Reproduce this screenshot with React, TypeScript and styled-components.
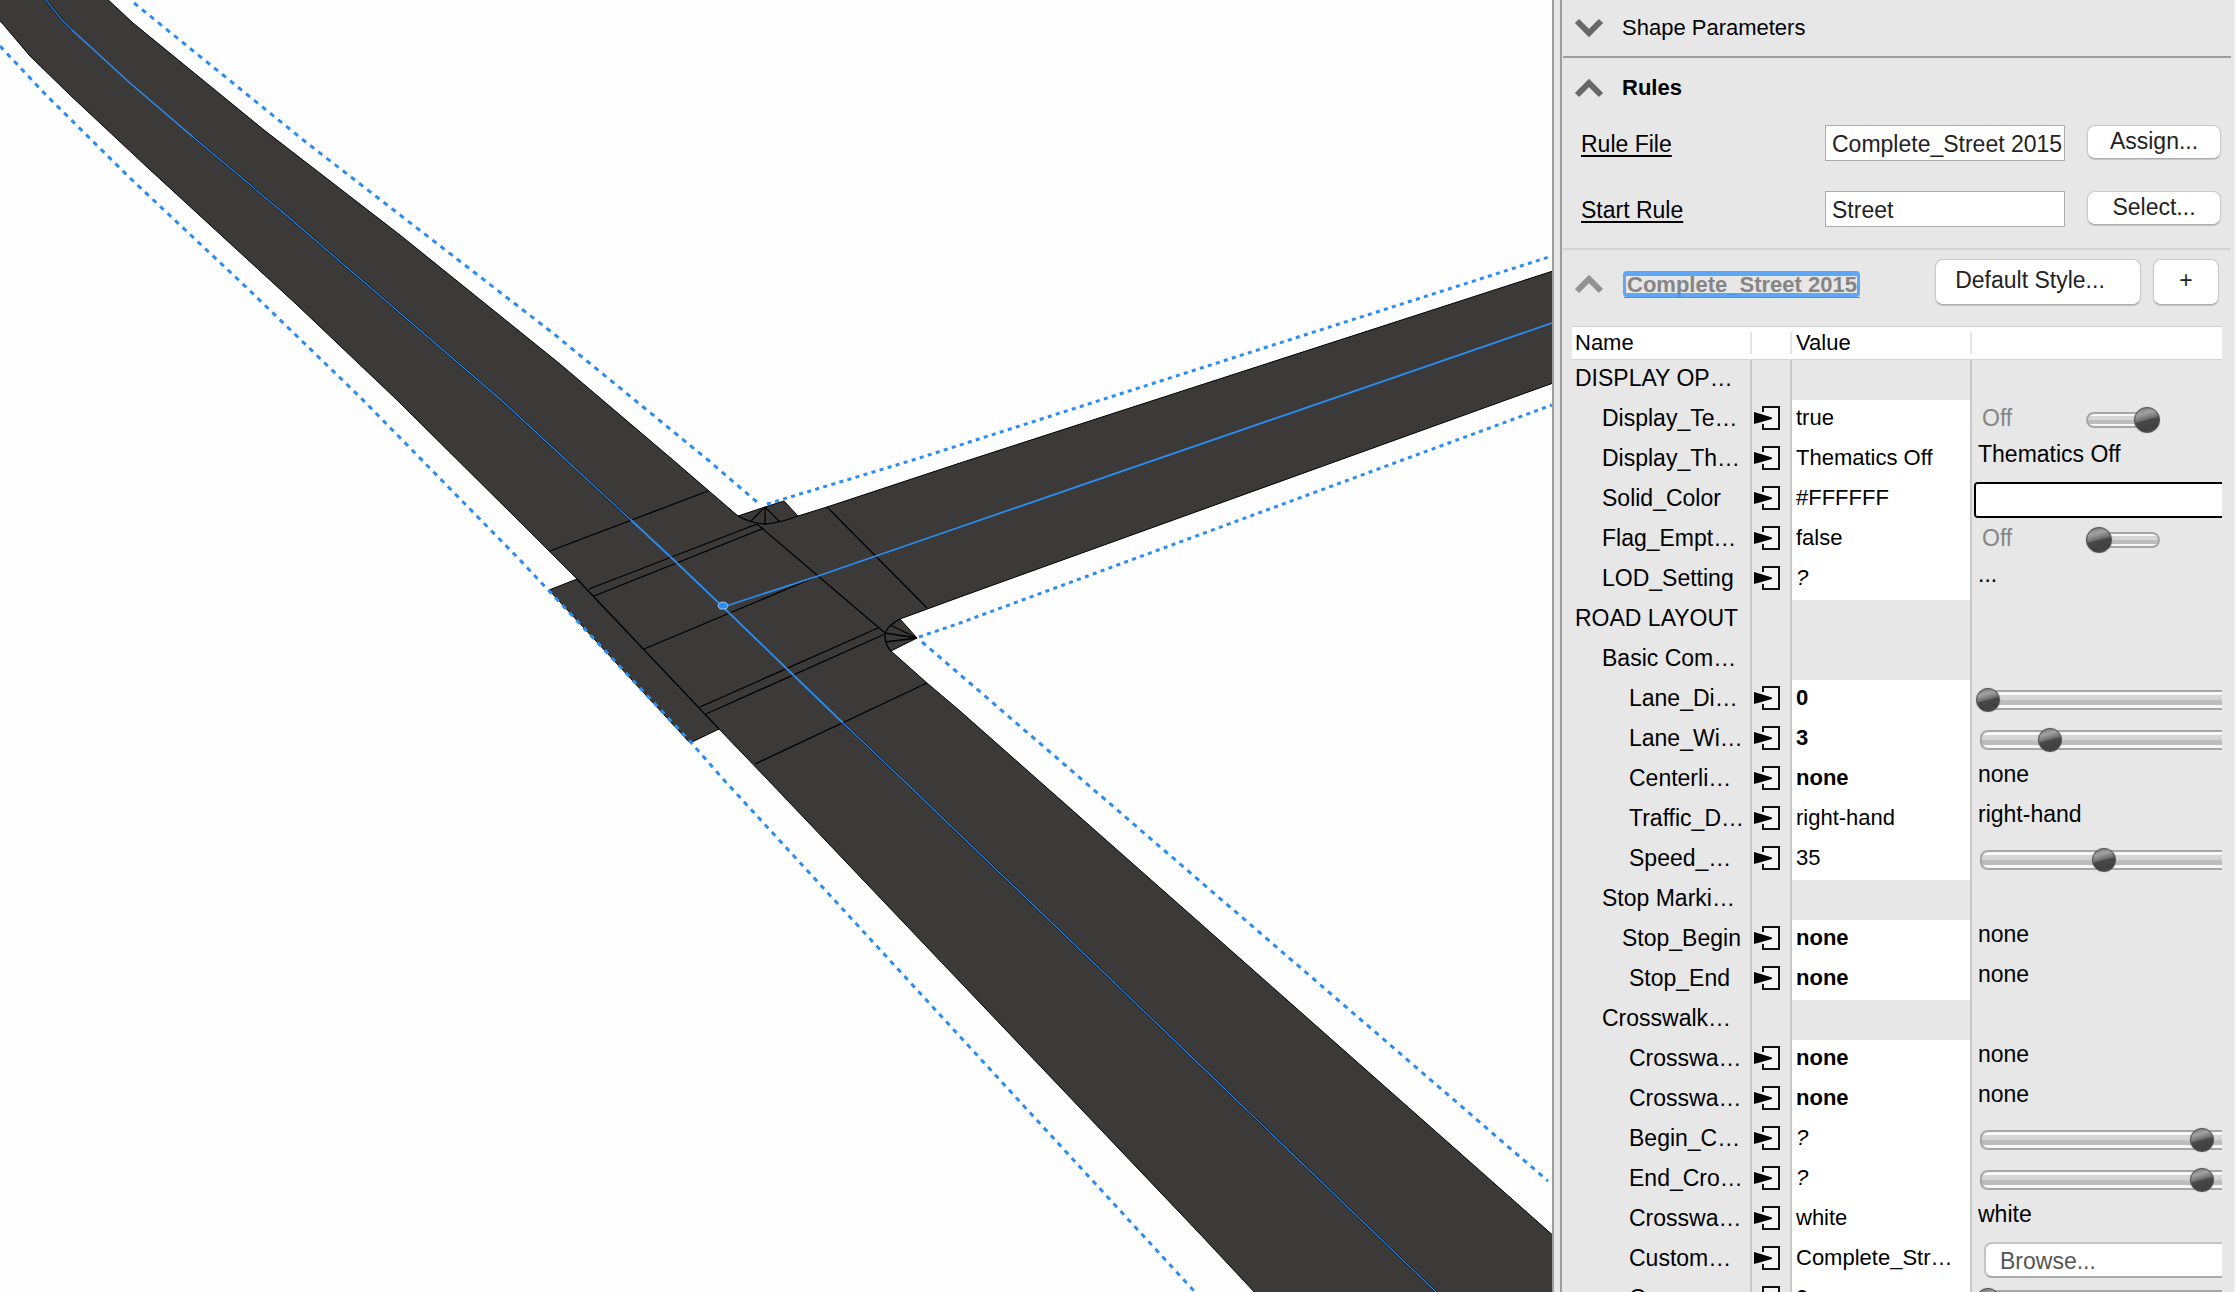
import React from "react";
import styled, { createGlobalStyle } from "styled-components";

const GlobalStyle = createGlobalStyle`
  * { box-sizing: border-box; }
  body { margin: 0; background: #fefefe; }
  body, button, input, select {
    font-family: "Liberation Sans", Arial, Helvetica, sans-serif;
    font-size: 22px;
    color: #000;
  }
`;

const Page = styled.main`
  display: flex;
  height: 100vh;
  overflow: hidden;
`;

const Viewport = styled.section`
  flex: 1;
  min-width: 0;
  background: #fefefe;
`;

const Scene = styled.svg`
  display: block;
  width: 100%;
  height: 100%;
`;

const Splitter = styled.div`
  flex: none;
  width: 10px;
  background: #e7e7e7;
  border: solid #9d9d9d;
  border-width: 0 2px;
`;

const Inspector = styled.aside`
  flex: none;
  width: 674px;
  overflow: hidden;
  background: #e7e7e7;
  border-right: 2px solid #f6f6f6;
`;

const SectionToggle = styled.button<{ $tall?: boolean }>`
  display: flex;
  align-items: center;
  gap: 18px;
  width: 100%;
  height: ${(p) => (p.$tall ? 60 : 56)}px;
  padding: 0 12px;
  border: 0;
  background: none;
  font-weight: ${(p) => (p.$tall ? 700 : 400)};
`;

const Divider = styled.hr<{ $light?: boolean }>`
  height: 2px;
  margin: 0 3px 0 1px;
  border: 0;
  background: ${(p) => (p.$light ? "#d4d4d4" : "#9d9d9d")};
`;

const Fields = styled.div`
  display: grid;
  gap: 16px;
  padding: 0 13px 14px 19px;
`;

const Field = styled.div`
  display: grid;
  grid-template-columns: 1fr 240px 134px;
  column-gap: 22px;
  align-items: center;
  height: 50px;
`;

const FieldLabel = styled.label`
  padding-top: 2px;
  font-size: 23px;
  text-decoration: underline;
  text-decoration-thickness: 2px;
  text-underline-offset: 3px;
`;

const TextBox = styled.input`
  width: 100%;
  height: 36px;
  padding: 2px 2px 0 6px;
  border: 1px solid #acacac;
  border-radius: 0;
  background: #fff;
  color: #222;
  font-size: 23px;
`;

const PushButton = styled.button<{ $large?: boolean; $width: number }>`
  width: ${(p) => p.$width}px;
  height: ${(p) => (p.$large ? 46 : 34)}px;
  margin-bottom: ${(p) => (p.$large ? 0 : 3)}px;
  padding: 0 ${(p) => (p.$width > 200 ? 16 : 0)}px ${(p) => (p.$large ? 4 : 0)}px 0;
  border: 1px solid #c9c9c9;
  border-bottom-color: #ababab;
  border-radius: 8px;
  background: #fff;
  box-shadow: 0 1px 1px #c4c4c4;
  color: #222;
  font-size: 23px;
`;

const StyleBar = styled.div`
  display: flex;
  align-items: center;
  gap: 12px;
  height: 64px;
  padding: 0 15px 0 12px;
`;

const StyleHeading = styled.div`
  flex: 1;
  display: flex;
  align-items: center;
  gap: 20px;
  padding-top: 4px;
`;

const IconButton = styled.button`
  display: flex;
  padding: 0;
  border: 0;
  background: none;
`;

const StyleLink = styled.a`
  position: relative;
  padding: 2px 3px 0;
  color: #858585;
  font-weight: 700;
  line-height: 24px;
  white-space: nowrap;
  text-decoration: none;
  border-bottom: 1px solid #858585;
  &::after {
    content: "";
    position: absolute;
    inset: 0 0 0 -1px;
    border: solid rgba(64, 152, 250, 0.82);
    border-width: 5px 3px 4px;
    border-radius: 4px;
  }
`;

const Attributes = styled.table`
  width: calc(100% - 22px);
  margin: 12px 12px 0 10px;
  border-collapse: separate;
  border-spacing: 0;
  table-layout: fixed;
`;

const NameCol = styled.col`
  width: 180px;
`;
const SourceCol = styled.col`
  width: 40px;
`;

const HeadCell = styled.th`
  height: 34px;
  padding: 0;
  border: solid #d3d3d3;
  border-width: 1px 0;
  background: #fff;
  font-weight: 400;
  text-align: left;
`;

const HeadLabel = styled.div<{ $last?: boolean; $pad: number }>`
  height: 22px;
  padding-left: ${(p) => p.$pad}px;
  border-right: ${(p) => (p.$last ? "0" : "2px solid #e4e4e4")};
  line-height: 22px;
`;

const NameCell = styled.th<{ $indent: number }>`
  height: 40px;
  padding: 0 0 4px ${(p) => p.$indent}px;
  border-right: 2px solid #c9c9c9;
  font-size: 23px;
  font-weight: 400;
  text-align: left;
  white-space: nowrap;
`;

const SourceCell = styled.td`
  padding: 6px 0 10px 2px;
  border-right: 2px solid #c9c9c9;
`;

const ValueCell = styled.td<{ $filled: boolean; $tone?: "bold" | "italic" }>`
  padding: 0 0 4px 4px;
  border-right: 2px solid #c9c9c9;
  background: ${(p) => (p.$filled ? "#fff" : "transparent")};
  font-weight: ${(p) => (p.$tone === "bold" ? 700 : 400)};
  font-style: ${(p) => (p.$tone === "italic" ? "italic" : "normal")};
  white-space: nowrap;
`;

const ControlCell = styled.td`
  padding: 0 0 0 2px;
  overflow: hidden;
`;

const ControlBox = styled.div`
  display: flex;
  align-items: center;
  height: 40px;
`;

const Choice = styled.select`
  height: 40px;
  padding: 0 0 12px 4px;
  border: 0;
  background: none;
  appearance: none;
  font-size: 23px;
`;

const SwitchLabel = styled.label`
  display: flex;
  align-items: center;
  padding-left: 8px;
  color: #858585;
  font-size: 23px;
`;

const SwitchText = styled.span`
  width: 104px;
  padding-bottom: 4px;
`;

const knob = `
  width: 24px;
  height: 24px;
  border: 1px solid #4a4a4a;
  border-radius: 50%;
  background: linear-gradient(165deg, #6e6e6e 0%, #a2a2a2 25%, #707070 46%, #484848 52%, #404040 80%, #555 100%);
  box-shadow: 0 0 1px #777;
`;

const groove = `
  height: 16px;
  border: 2px solid #a6a6a6;
  border-radius: 8px;
  background: linear-gradient(#f8f8f8 0 16%, #d6d6d6 20% 50%, #bcbcbc 54% 80%, #f6f6f6 84%);
`;

const Switch = styled.input`
  ${groove}
  display: flex;
  align-items: center;
  width: 74px;
  margin: 0;
  appearance: none;
  &::before {
    content: "";
    ${knob}
    flex: none;
    margin: 0 -2px;
  }
  &:checked { justify-content: flex-end; }
`;

const SliderBox = styled.div`
  flex: none;
  display: grid;
  align-items: center;
  width: 300px;
  margin-left: 2px;
  &::before {
    content: "";
    ${groove}
    grid-area: 1 / 1;
    margin: 0 4px;
  }
`;

const Range = styled.input`
  grid-area: 1 / 1;
  width: 100%;
  height: 24px;
  margin: 0;
  background: none;
  appearance: none;
  &::-webkit-slider-thumb {
    appearance: none;
    ${knob}
  }
`;

const ColorWell = styled.input`
  flex: none;
  width: 300px;
  height: 36px;
  margin: 0;
  padding: 0;
  border: 2px solid #000;
  border-radius: 4px;
  background: #fff;
  appearance: none;
  &::-webkit-color-swatch-wrapper { padding: 0; }
  &::-webkit-color-swatch { border: 0; }
`;

const BrowseButton = styled.button`
  flex: none;
  width: 300px;
  height: 36px;
  margin-left: 10px;
  padding: 2px 0 0 14px;
  border: 2px solid #c4c4c4;
  border-bottom-color: #ababab;
  border-radius: 8px;
  background: #fff;
  color: #555;
  font-size: 23px;
  text-align: left;
`;

function Chevron({ down, color = "#686868" }: { down?: boolean; color?: string }) {
  return (
    <svg width="30" height="20" viewBox="0 0 30 20" aria-hidden="true">
      <path
        d={down ? "M3 3 L15 15 L27 3" : "M3 17 L15 5 L27 17"}
        fill="none"
        stroke={color}
        strokeWidth="6"
      />
    </svg>
  );
}

const SourceIcon = styled.svg`
  display: block;
`;

function Source() {
  return (
    <SourceIcon width="26" height="24" viewBox="0 0 26 24" role="img" aria-label="Source">
      <path d="M9 6 V1 H25 V23 H9 V18" fill="#f4f4f4" stroke="#111" strokeWidth="2" />
      <path d="M0 6 L18 11.5 V13 L0 18 Z" fill="#000" />
    </SourceIcon>
  );
}

type Control =
  | { kind: "switch"; on: boolean }
  | { kind: "choice"; label: string }
  | { kind: "color" }
  | { kind: "browse" }
  | { kind: "slider"; at: number };

interface Attribute {
  name: string;
  level: 0 | 1 | 2 | 3;
  value?: string;
  tone?: "bold" | "italic";
  control?: Control;
}

const INDENTS = [3, 30, 57, 50];

const choice = (label: string): Control => ({ kind: "choice", label });
const slider = (at: number): Control => ({ kind: "slider", at });

const ATTRIBUTES: Attribute[] = [
  { name: "DISPLAY OP…", level: 0 },
  { name: "Display_Te…", level: 1, value: "true", control: { kind: "switch", on: true } },
  { name: "Display_Th…", level: 1, value: "Thematics Off", control: choice("Thematics Off") },
  { name: "Solid_Color", level: 1, value: "#FFFFFF", control: { kind: "color" } },
  { name: "Flag_Empt…", level: 1, value: "false", control: { kind: "switch", on: false } },
  { name: "LOD_Setting", level: 1, value: "?", tone: "italic", control: choice("...") },
  { name: "ROAD LAYOUT", level: 0 },
  { name: "Basic Com…", level: 1 },
  { name: "Lane_Di…", level: 2, value: "0", tone: "bold", control: slider(0) },
  { name: "Lane_Wi…", level: 2, value: "3", tone: "bold", control: slider(62) },
  { name: "Centerli…", level: 2, value: "none", tone: "bold", control: choice("none") },
  { name: "Traffic_D…", level: 2, value: "right-hand", control: choice("right-hand") },
  { name: "Speed_…", level: 2, value: "35", control: slider(116) },
  { name: "Stop Marki…", level: 1 },
  { name: "Stop_Begin", level: 3, value: "none", tone: "bold", control: choice("none") },
  { name: "Stop_End", level: 2, value: "none", tone: "bold", control: choice("none") },
  { name: "Crosswalk…", level: 1 },
  { name: "Crosswa…", level: 2, value: "none", tone: "bold", control: choice("none") },
  { name: "Crosswa…", level: 2, value: "none", tone: "bold", control: choice("none") },
  { name: "Begin_C…", level: 2, value: "?", tone: "italic", control: slider(214) },
  { name: "End_Cro…", level: 2, value: "?", tone: "italic", control: slider(214) },
  { name: "Crosswa…", level: 2, value: "white", control: choice("white") },
  { name: "Custom…", level: 2, value: "Complete_Str…", control: { kind: "browse" } },
  { name: "Crosswa…", level: 2, value: "0", tone: "bold", control: slider(0) },
];

function ControlView({ control, name }: { control: Control; name: string }) {
  switch (control.kind) {
    case "switch":
      return (
        <SwitchLabel>
          <SwitchText>Off</SwitchText>
          <Switch type="checkbox" role="switch" defaultChecked={control.on} />
        </SwitchLabel>
      );
    case "choice":
      return (
        <Choice aria-label={name}>
          <option>{control.label}</option>
        </Choice>
      );
    case "color":
      return <ColorWell type="color" defaultValue="#ffffff" aria-label={name} />;
    case "browse":
      return <BrowseButton>Browse...</BrowseButton>;
    case "slider":
      return (
        <SliderBox>
          <Range type="range" min={0} max={276} defaultValue={control.at} aria-label={name} />
        </SliderBox>
      );
  }
}

const ROAD = [
  "M-4 -4 L104 -4 L133 23 L264 130 L400 235 L560 364 L673 460 L738 516",
  "L765 507 L784 501 L798 516 L827 507 L960 463 L1556 270 L1556 382",
  "L960 597 L900 619 L917 638 L891 651 L927 683 L960 711 L1287 1000 L1556 1238",
  "L1556 1296 L1258 1296 L1200 1234 L768 780 L719 729 L690 743 L549 590 L577 579",
  "L520 522 L397 400 L296 304 L148 168 L70 95 L30 56 L2 23 L-4 17 Z",
].join(" ");

const SEAMS = [
  "M577 579 L719 729",
  "M738 516 Q750 523 765 524 Q780 523 798 516",
  "M765 507 L750 522 M765 507 V524 M765 507 L780 522",
  "M900 619 Q885 627 885 636 Q885 645 891 651",
  "M917 638 L890 625 M917 638 L885 633 M917 638 L885 642",
  "M708 491 L550 551 M757 524 L589 589 M764 528 L594 596",
  "M644 649 L818 576 M757 524 L885 633 M827 507 L927 608",
  "M700 707 L878 628 M706 714 L885 634 M755 764 L927 683",
].join(" ");

const CENTERLINE = "M46 0 L62 20 L72 30 M193 137 L286 215 L500 399 L566 460 L631 520 M843 723 L903 780 L1200 1065 L1436 1292";

function RoadScene() {
  return (
    <Scene viewBox="0 0 1552 1292" preserveAspectRatio="xMinYMin slice" role="img" aria-label="Street intersection">
      <path d={ROAD} fill="#3b3a38" stroke="#000" strokeWidth="1" />
      <path d={SEAMS} fill="none" stroke="#000" strokeWidth="1.3" />
      <path d={CENTERLINE} fill="none" stroke="#000" strokeWidth="2.2" />
      <path d={CENTERLINE} fill="none" stroke="#2b8cf2" strokeWidth="1.2" />
      <g fill="none" stroke="#2b8cf2">
        <path d="M72 30 L130 83 L193 137" strokeWidth="1.5" />
        <path d="M631 520 L677 563 L723 607 L843 723" strokeWidth="1.8" />
        <path d="M723 607 L818 576 L960 527 L1552 323" strokeWidth="1.8" />
      </g>
      <path d="M718 606 A5 4 0 0 1 728 606 L726 609 H720 Z" fill="#2b8cf2" stroke="#9cc8f8" strokeWidth="1" />
      <g fill="none" stroke="#2b8cf2" strokeWidth="3">
        <g strokeDasharray="5 5.3">
          <path d="M134 3 L307 143 L554 334 L708 460 L758 503" />
          <path d="M0 46 L45 94 L130 178 L246 287 L361 398 L520 560 L550 592 L687 738 L723 779 L1195 1292" />
          <path d="M922 642 L957 672 L1338 1000 L1548 1181" />
        </g>
        <g strokeDasharray="4 4.4">
          <path d="M767 504 L913 460 L1552 256" />
          <path d="M919 637 L960 623 L1552 405" />
        </g>
      </g>
    </Scene>
  );
}

export default function App() {
  return (
    <>
      <GlobalStyle />
      <Page>
        <Viewport>
          <RoadScene />
        </Viewport>
        <Splitter />
        <Inspector>
          <SectionToggle aria-expanded={false}>
            <Chevron down />
            Shape Parameters
          </SectionToggle>
          <Divider />
          <SectionToggle $tall aria-expanded>
            <Chevron />
            Rules
          </SectionToggle>
          <Fields>
            <Field>
              <FieldLabel htmlFor="rule-file">Rule File</FieldLabel>
              <TextBox id="rule-file" defaultValue="Complete_Street 2015" />
              <PushButton $width={134}>Assign...</PushButton>
            </Field>
            <Field>
              <FieldLabel htmlFor="start-rule">Start Rule</FieldLabel>
              <TextBox id="start-rule" defaultValue="Street" />
              <PushButton $width={134}>Select...</PushButton>
            </Field>
          </Fields>
          <Divider $light />
          <StyleBar>
            <StyleHeading>
              <IconButton aria-label="Collapse">
                <Chevron color="#929292" />
              </IconButton>
              <StyleLink href="#style">Complete_Street 2015</StyleLink>
            </StyleHeading>
            <PushButton $large $width={206}>Default Style...</PushButton>
            <PushButton $large $width={66}>+</PushButton>
          </StyleBar>
          <Attributes>
            <colgroup>
              <NameCol />
              <SourceCol />
              <NameCol />
              <col />
            </colgroup>
            <thead>
              <tr>
                <HeadCell><HeadLabel $pad={3}>Name</HeadLabel></HeadCell>
                <HeadCell><HeadLabel $pad={0} /></HeadCell>
                <HeadCell><HeadLabel $pad={4}>Value</HeadLabel></HeadCell>
                <HeadCell><HeadLabel $pad={0} $last /></HeadCell>
              </tr>
            </thead>
            <tbody>
              {ATTRIBUTES.map((a, i) => (
                <tr key={i}>
                  <NameCell scope="row" $indent={INDENTS[a.level]}>{a.name}</NameCell>
                  <SourceCell>{a.value && <Source />}</SourceCell>
                  <ValueCell $filled={!!a.value} $tone={a.tone}>{a.value}</ValueCell>
                  <ControlCell>
                    <ControlBox>
                      {a.control && <ControlView control={a.control} name={a.name} />}
                    </ControlBox>
                  </ControlCell>
                </tr>
              ))}
            </tbody>
          </Attributes>
        </Inspector>
      </Page>
    </>
  );
}
